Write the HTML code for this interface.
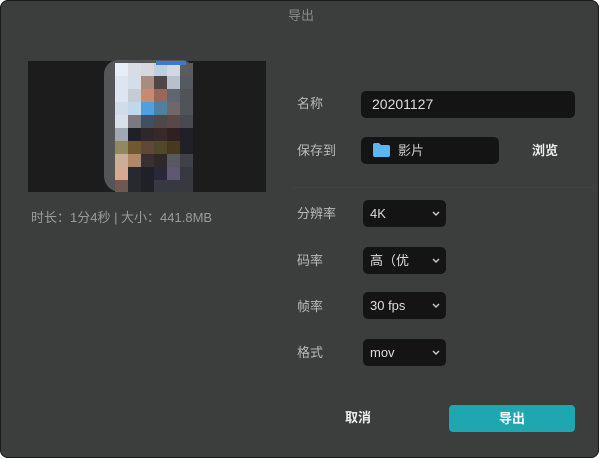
<!DOCTYPE html>
<html><head><meta charset="utf-8"><style>
*{margin:0;padding:0;box-sizing:border-box}
body{width:600px;height:459px;background:#fff;position:relative;overflow:hidden;font-family:"Liberation Sans","Noto Sans CJK SC",sans-serif}
.dlg{position:absolute;left:0;top:0;width:599px;height:458px;background:#3c3e3e;box-shadow:inset 0 0 0 1px #1a1a1a;border-radius:8px;overflow:hidden}
.a{position:absolute}
.t{position:absolute;color:#b9b9b9;font-size:13px;line-height:16px}
.inp{position:absolute;background:#141414;border-radius:5px}
.sel{position:absolute;background:#141414;border-radius:5px;left:363px;width:83px;height:27px;color:#ddd;font-size:13px;line-height:27px;padding-left:7px}
.sel svg{position:absolute;right:6px;top:11px}
.c{position:absolute;width:13px;height:13px}
</style></head><body><div class="dlg">
<div class="t" style="left:288px;top:8px;color:#8a8a8a">导出</div>
<div class="a" style="left:28px;top:61px;width:238px;height:131px;background:#1c1c1c"></div>
<div class="a" style="left:104px;top:60px;width:88px;height:132px;background:#5a5c5e;border-radius:14px 10px 14px 16px;opacity:.9"></div>
<div id="g"></div>
<div class="a" style="left:156px;top:61px;width:30px;height:4px;background:#3a7ad0"></div>
<div class="t" style="left:31px;top:210px;color:#9a9a9a">时长：1分4秒 | 大小：441.8MB</div>
<div class="a" style="left:293px;top:187px;width:300px;height:1px;background:#414343"></div>
<div class="t" style="left:297px;top:96px">名称</div>
<div class="inp" style="left:361px;top:91px;width:214px;height:27px;color:#ddd;font-size:14px;line-height:27px;padding-left:11px">20201127</div>
<div class="t" style="left:297px;top:143px">保存到</div>
<div class="inp" style="left:361px;top:137px;width:138px;height:27px"></div>
<svg class="a" style="left:373px;top:143px" width="17" height="14"><path d="M0 2Q0 0 2 0H6L8 2H15Q17 2 17 4V12Q17 14 15 14H2Q0 14 0 12Z" fill="#5ab8ee"/></svg>
<div class="t" style="left:398px;top:143px;color:#ccc">影片</div>
<div class="t" style="left:532px;top:143px;color:#eee;font-weight:bold">浏览</div>
<div class="t" style="left:297px;top:206px">分辨率</div>
<div class="sel" style="top:200px">4K<svg width="8" height="5"><path d="M1 1L4 4L7 1" stroke="#ccc" stroke-width="1.4" fill="none"/></svg></div>
<div class="t" style="left:297px;top:253px">码率</div>
<div class="sel" style="top:247px">高（优<svg width="8" height="5"><path d="M1 1L4 4L7 1" stroke="#ccc" stroke-width="1.4" fill="none"/></svg></div>
<div class="t" style="left:297px;top:299px">帧率</div>
<div class="sel" style="top:292px">30 fps<svg width="8" height="5"><path d="M1 1L4 4L7 1" stroke="#ccc" stroke-width="1.4" fill="none"/></svg></div>
<div class="t" style="left:297px;top:345px">格式</div>
<div class="sel" style="top:339px">mov<svg width="8" height="5"><path d="M1 1L4 4L7 1" stroke="#ccc" stroke-width="1.4" fill="none"/></svg></div>
<div class="t" style="left:345px;top:410px;color:#eee;font-weight:bold">取消</div>
<div class="a" style="left:449px;top:405px;width:126px;height:27px;background:#1fa7b1;border-radius:4px;color:#fff;font-weight:bold;font-size:13px;line-height:27px;text-align:center">导出</div>
</div>
<script>
var c=[["e8eef8","d8dde5","d5d8dd","bdd0e0","d0d8e5","5a5c5e"],
["dde6f0","d5dde8","a88c80","504848","b8c0cc","555a60"],
["dde6f0","c8ccd2","c88a70","986858","606570","505458"],
["d0dce8","c0d8ec","50a0e0","5080a0","706868","505458"],
["d8e0e8","7a7a80","405060","504848","5a4848","484a50"],
["a0a8b0","202028","302828","382828","302020","202028"],
["908860","705830","604838","504828","483820","202028"],
["c8b098","b08868","383030","302828","585860","404048"],
["d8a890","282830","202028","282838","605870","383840"],
["705850","282830","202028","383840","383840","383840"]];
var h="";for(var r=0;r<10;r++)for(var k=0;k<6;k++)h+='<div class="c" style="left:'+(115+k*13)+'px;top:'+(63+r*13)+'px;height:'+(r==9?(192-180):13)+'px;background:#'+c[r][k]+'"></div>';
document.getElementById("g").outerHTML=h;
</script>
</body></html>
